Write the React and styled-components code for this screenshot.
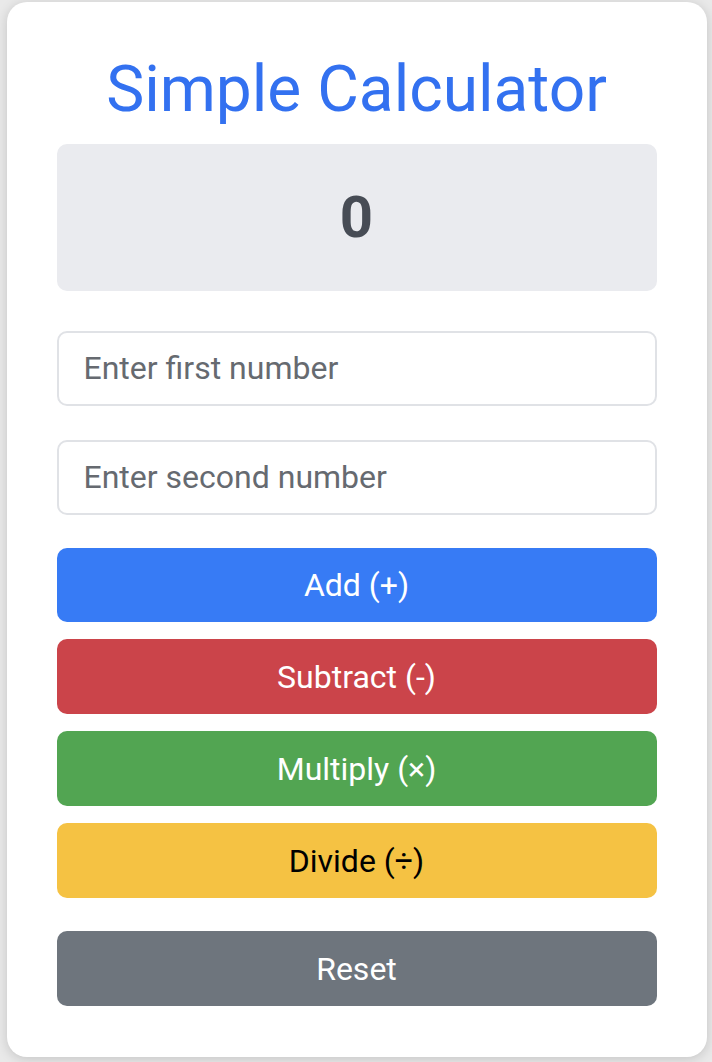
import React, { useState } from 'react';
import styled, { createGlobalStyle } from 'styled-components';

const GlobalStyle = createGlobalStyle`
  html, body {
    margin: 0;
    padding: 0;
    background: #e9e9e9;
    font-family: Roboto, "Liberation Sans", Arial, sans-serif;
  }
  * { box-sizing: border-box; }
`;

const Page = styled.div`
  display: flex;
  justify-content: center;
  padding: 2px 0 5px 1px;
  min-height: 1062px;
`;

const Card = styled.div`
  width: 700px;
  height: 1055px;
  background: #ffffff;
  border-radius: 20px;
  box-shadow: 0 2px 12px rgba(0, 0, 0, 0.16);
  padding: 48px 50px 51px;
  display: flex;
  flex-direction: column;
`;

const Title = styled.h1`
  margin: 0 0 14px;
  font-size: 64px;
  line-height: 80px;
  font-weight: 400;
  color: #3371f0;
  text-align: center;
`;

const Display = styled.div`
  height: 147px;
  border-radius: 10px;
  background: #eaebef;
  display: flex;
  align-items: center;
  justify-content: center;
  font-size: 58px;
  font-weight: 700;
  color: #474c55;
  margin-bottom: 40px;
`;

const Field = styled.input`
  height: 75px;
  width: 100%;
  border: 2px solid #e0e2e6;
  border-radius: 10px;
  padding: 0 25px;
  font-family: inherit;
  font-size: 32px;
  color: #333;
  outline: none;
  margin-bottom: ${p => p.$gap}px;
  &::placeholder { color: #666a70; }
`;

const palette = {
  add: ['#377bf5', '#fff'],
  sub: ['#cb444a', '#fff'],
  mul: ['#52a552', '#fff'],
  div: ['#f5c243', '#000'],
  reset: ['#6e757d', '#fff'],
};

const OpButton = styled.button`
  height: 75px;
  width: 100%;
  border: none;
  border-radius: 10px;
  background: ${p => palette[p.$kind][0]};
  color: ${p => palette[p.$kind][1]};
  font-family: inherit;
  font-size: 32px;
  font-weight: 400;
  margin-bottom: ${p => p.$gap}px;
  cursor: pointer;
`;

export default function App() {
  const [a, setA] = useState('');
  const [b, setB] = useState('');
  const [result, setResult] = useState(0);

  const run = op => {
    const x = parseFloat(a) || 0;
    const y = parseFloat(b) || 0;
    if (op === 'add') setResult(x + y);
    if (op === 'sub') setResult(x - y);
    if (op === 'mul') setResult(x * y);
    if (op === 'div') setResult(y === 0 ? 'Error' : x / y);
  };

  const reset = () => {
    setA('');
    setB('');
    setResult(0);
  };

  return (
    <Page>
      <GlobalStyle />
      <Card>
        <Title>Simple Calculator</Title>
        <Display>{result}</Display>
        <Field
          type="number"
          placeholder="Enter first number"
          value={a}
          onChange={e => setA(e.target.value)}
          $gap={34}
        />
        <Field
          type="number"
          placeholder="Enter second number"
          value={b}
          onChange={e => setB(e.target.value)}
          $gap={33}
        />
        <OpButton $kind="add" $gap={17} onClick={() => run('add')}>Add (+)</OpButton>
        <OpButton $kind="sub" $gap={17} onClick={() => run('sub')}>Subtract (-)</OpButton>
        <OpButton $kind="mul" $gap={17} onClick={() => run('mul')}>Multiply (×)</OpButton>
        <OpButton $kind="div" $gap={33} onClick={() => run('div')}>Divide (÷)</OpButton>
        <OpButton $kind="reset" $gap={0} onClick={reset}>Reset</OpButton>
      </Card>
    </Page>
  );
}
